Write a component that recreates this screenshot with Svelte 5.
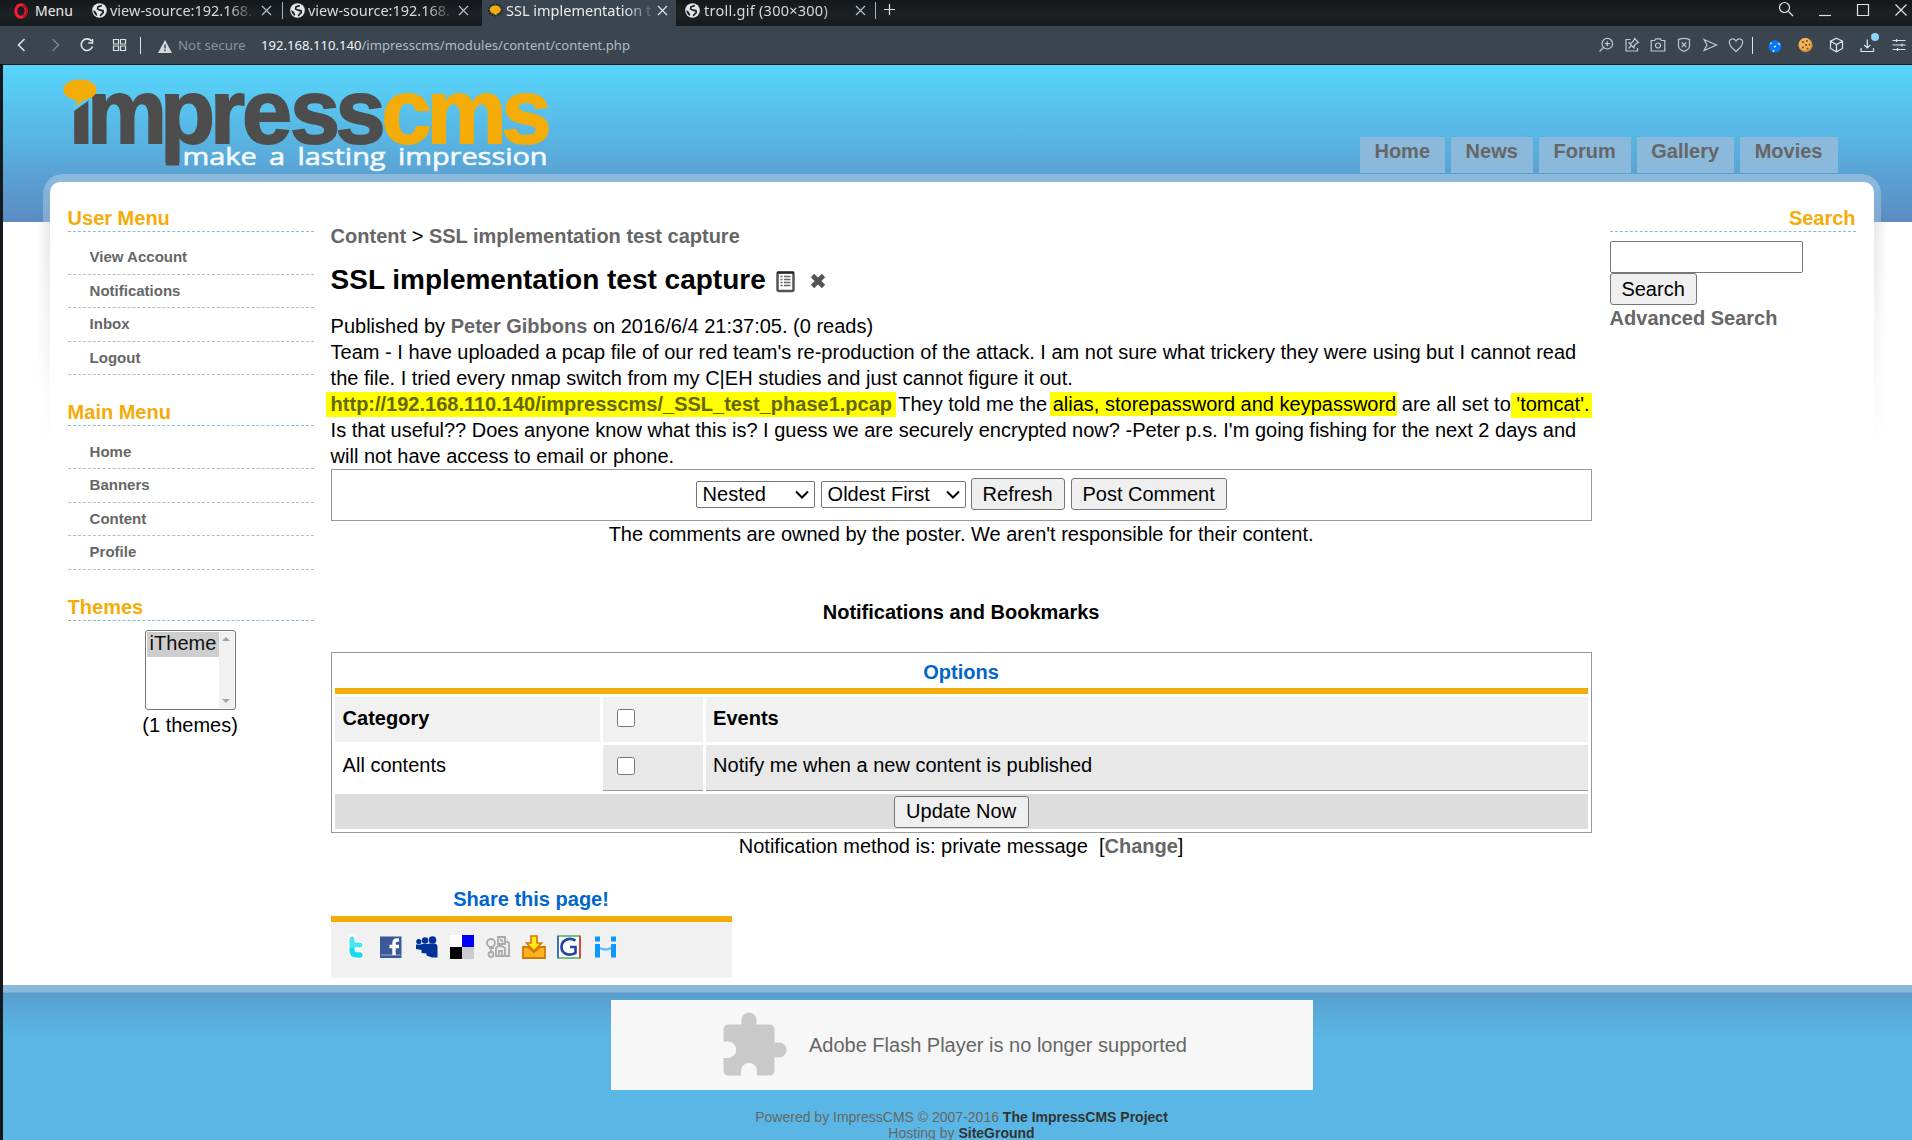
<script>
  const tabs = [
    { title: 'view-source:192.168.', icon: 'globe', kind: 'first' },
    { title: 'view-source:192.168.', icon: 'globe', kind: 'second' },
    { title: 'SSL implementation t', icon: 'bubble', kind: 'active' },
    { title: 'troll.gif (300×300)', icon: 'globe', kind: 'last' }
  ];
  const nav = ['Home', 'News', 'Forum', 'Gallery', 'Movies'];
  const menus = [
    { title: 'User Menu', items: ['View Account', 'Notifications', 'Inbox', 'Logout'] },
    { title: 'Main Menu', items: ['Home', 'Banners', 'Content', 'Profile'] }
  ];
</script>

<div class="window">
  <header class="tabbar">
    <div class="opera">
      <svg width="14" height="16" viewBox="0 0 14 16"><ellipse cx="7" cy="8" rx="5.2" ry="6.3" fill="none" stroke="#fb1d32" stroke-width="3" /><path d="M9 2.2c3 1 4 3.300 4 5.800s-1 4.800-4 5.800" fill="none" stroke="#a80f1e" stroke-width="2" /></svg>
      <span>Menu</span>
    </div>
    {#each tabs as tab}
      <div class="tab {tab.kind}">
        {#if tab.icon === 'globe'}
          <svg width="15" height="15" viewBox="0 0 15 15"><circle cx="7.500" cy="7.500" r="7.300" fill="#e4e6e8" /><path d="M9.800 2.600 6 3.800 5.600 6l2.600 1.200 2.800.6.200 1.800-1.700 1.600-1.300 1.700" fill="none" stroke="#1b1e21" stroke-width="1.700" /><path d="m1.500 7 2.300 1.800 1.400 2.700-.3 1.500C3 12 1 9.500 1.500 7z" fill="#1b1e21" /></svg>
        {:else}
          <svg width="15" height="15" viewBox="0 0 15 15"><ellipse cx="7.300" cy="7" rx="6.800" ry="5.800" fill="none" stroke="#14171a" stroke-width="1.200" stroke-dasharray="1.500 1.500" /><ellipse cx="7.300" cy="6.600" rx="5.500" ry="4" fill="#f4ac08" /><path d="m5 9.500 3 3 1.500-3z" fill="#f4ac08" /></svg>
        {/if}
        <span class="tab-title">{tab.title}</span>
        <svg class="x" width="11" height="11" viewBox="0 0 11 11"><path d="m1 1 9 9M10 1l-9 9" /></svg>
      </div>
    {/each}
    <svg class="line plus" width="13" height="13" viewBox="0 0 13 13"><path d="M6.500 1v11M1 6.500h11" /></svg>
    <div class="winctl">
      <svg class="line" width="16" height="16" viewBox="0 0 16 16"><circle cx="6.500" cy="6.500" r="5" /><path d="m10.500 10.500 4.500 4.500" /></svg>
      <svg class="line" width="14" height="16" viewBox="0 0 14 16"><path d="M1 14.500h12" /></svg>
      <svg class="line" width="14" height="16" viewBox="0 0 14 16"><path d="M1.500 3.500h11v11h-11z" /></svg>
      <svg class="line" width="14" height="16" viewBox="0 0 14 16"><path d="m1.500 3.500 11 11m0-11-11 11" /></svg>
    </div>
  </header>

  <div class="toolbar">
    <div class="navicons">
      <svg class="line" viewBox="0 0 16 16"><path d="m10.500 2-6 6 6 6" stroke-width="1.600" /></svg>
      <svg class="line dim" viewBox="0 0 16 16"><path d="m5.500 2 6 6-6 6" stroke-width="1.400" /></svg>
      <svg class="line" viewBox="0 0 16 16"><path d="M13.500 9.500a5.800 5.800 0 1 1-1-5.500M13.500 2v4H9.300" stroke-width="1.600" /></svg>
      <svg class="line" viewBox="0 0 16 16"><path d="M1.500 2.500h5v4.500h-5zM8.500 2.500h5v4.500h-5zM1.500 9h5v4.500h-5zM8.500 9h5v4.500h-5z" /></svg>
    </div>
    <i class="bar"></i>
    <svg class="warn" width="14" height="13" viewBox="0 0 14 13"><path d="M7 0 14 13H0z" fill="#d5d9dc" /><path d="M7 4.500v4M7 9.600v1.600" stroke="#3b454f" stroke-width="1.500" /></svg>
    <span class="secure">Not secure</span>
    <span class="url"><b>192.168.110.140</b>/impresscms/modules/content/content.php</span>
    <div class="actions">
      <svg class="line" viewBox="0 0 16 16"><circle cx="9.300" cy="6.700" r="5.300" /><path d="m5.500 10.500-4 4M9.300 4.200v5M6.800 6.700h5" /></svg>
      <svg class="line" viewBox="0 0 16 16"><path d="M6.500 2.500H2v11.500h11.500v-3M10.500 1.500l4 4-2 .8-2.300 2.300-.2 2.400-5-5 2.500-.2L9.800 3.500zM7.300 8.800 4.500 11.500" /></svg>
      <svg class="line" viewBox="0 0 16 16"><path d="M1.200 3.500H4.700l1-1.700h4.600l1 1.700h3.500V14H1.200z" /><circle cx="8" cy="8.500" r="2.500" /></svg>
      <svg class="line" viewBox="0 0 16 16"><path d="M8 1.300c2 0 4 .7 5.500 1.200v6.500c0 3-3 4.500-5.500 5.500-2.500-1-5.500-2.500-5.500-5.500V2.500C4 2 6 1.300 8 1.300zM5.700 5.500l4.600 4.700m0-4.700-4.600 4.700" /></svg>
      <svg class="line" viewBox="0 0 16 16"><path d="M2 2.500 14.500 8 2 13.500 5 8z" /></svg>
      <svg class="line" viewBox="0 0 16 16"><path d="M8 14.500C3 10.500 1.300 8 1.300 5.300 1.300 1.500 6 .8 8 4c2-3.200 6.700-2.500 6.700 1.300C14.700 8 13 10.500 8 14.500z" /></svg>
    </div>
    <i class="bar"></i>
    <div class="extensions">
      <svg viewBox="0 0 16 16"><circle cx="8" cy="9.500" r="6.200" fill="#0a78f5" /><path d="M3 6.500 5 6M7 10l2-1M11 6l2 2M6 15l1-2" stroke="#b8dcff" stroke-width="1.500" /></svg>
      <svg viewBox="0 0 16 16"><circle cx="7.500" cy="8" r="7.200" fill="#d98a2b" /><circle cx="7" cy="7.300" r="6.200" fill="#f0b45c" /><g fill="#7b3f14"><circle cx="5" cy="5" r="1" /><circle cx="9" cy="4" r=".9" /><circle cx="8" cy="8" r="1.100" /><circle cx="11.500" cy="7.500" r=".9" /><circle cx="5" cy="10.500" r=".9" /><circle cx="9.500" cy="11.500" r="1" /></g></svg>
      <svg class="line" viewBox="0 0 16 16"><path d="m7.500 1.200 6 3v7.200l-6 3.400-6-3.400V4.200zM1.500 4.200l6 3.300 6-3.300M7.500 7.500v7" /></svg>
      <svg class="line" viewBox="0 0 16 16"><path d="M1 11v3.500h12.500V11M7.300 2.500V11M4.300 8l3 3 3-3" /></svg>
      <svg class="line" viewBox="0 0 16 16"><path d="M1.500 3.500h13M1.500 8h13M1.500 12.500h13M5.500 2v3M11 6.500v3M6.500 11v3" /></svg>
      <i class="dot"></i>
    </div>
  </div>

  <main class="page">
    <div class="banner">
      <svg class="logo" width="490" height="98" viewBox="0 0 490 98">
        <g font-family="Liberation Sans" font-weight="bold" font-size="90" stroke-width="1.800">
          <text x="5.700 24 97 147 179 227 272.500" y="65.500" fill="#4d4d4d" stroke="#4d4d4d">ımpress</text>
          <text x="318.500 363.500 438.500" y="65.500" fill="#f4ac08" stroke="#f4ac08">cms</text>
        </g>
        <path d="M103 78h13v10.500h-13z" fill="#4d4d4d" />
        <path d="M8 16h20l-3 8-14 10z" fill="#5ac8f2" />
        <path d="M17 2.500c9 0 16.500 4 16.500 10.300 0 5.500-5 9.200-13 10.200-2 3-4.500 4.500-9 5.500 2-2 2.500-3 2-5.500C5.500 22 .5 18.500.5 12.800.5 6.500 8 2.500 17 2.500z" fill="#f4ac08" />
        <text x="119.500" y="88" font-family="Open Sans" font-size="23.500" word-spacing="4" fill="#f4f9fd" stroke="#f4f9fd" stroke-width=".6" textLength="365" lengthAdjust="spacingAndGlyphs">make a lasting impression</text>
      </svg>
      <nav>
        {#each nav as item}<a href="#top">{item}</a>{/each}
      </nav>
    </div>

    <div class="frame">
      <div class="sheet">
        <aside class="left">
          {#each menus as menu}
            <section class="menu">
              <h3>{menu.title}</h3>
              <ul>
                {#each menu.items as item}<li>{item}</li>{/each}
              </ul>
            </section>
          {/each}
          <section>
            <h3>Themes</h3>
            <div class="themes">
              <div class="listbox">
                <span>iTheme</span>
                <div class="scroll">
                  <svg width="8" height="4" viewBox="0 0 8 4"><path d="M0 4 4 0l4 4z" fill="#a3a3a3" /></svg>
                  <svg width="8" height="4" viewBox="0 0 8 4"><path d="m0 0 4 4 4-4z" fill="#a3a3a3" /></svg>
                </div>
              </div>
              <span>(1 themes)</span>
            </div>
          </section>
        </aside>

        <article>
          <div class="crumbs"><a href="#top">Content</a> &gt; <a href="#top">SSL implementation test capture</a></div>
          <h1>
            <span>SSL implementation test capture</span>
            <svg class="doc" width="20" height="22" viewBox="0 0 20 22"><rect x="1.500" y="1.500" width="16" height="18.500" rx="1.500" fill="#fff" stroke="#555" stroke-width="2.500" /><path d="M1 1.500h17" stroke="#222" stroke-width="2" /><path d="M4.500 5.500h2M8 5.500h6.500M4.500 8.500h2M8 8.500h6.500M4.500 11.500h2M8 11.500h6.500M4.500 14.500h2M8 14.500h6.500" stroke="#666" stroke-width="1.500" /></svg>
            <svg class="del" width="16" height="16" viewBox="0 0 16 16"><path d="m2.500 2.500 11 11m0-11-11 11" stroke="#555" stroke-width="4.800" /></svg>
          </h1>
          <p>
            Published by <a href="#top">Peter Gibbons</a> on 2016/6/4 21:37:05. (0 reads)<br />
            Team - I have uploaded a pcap file of our red team's re-production of the attack. I am not sure what trickery they were using but I cannot read<br />
            the file. I tried every nmap switch from my C|EH studies and just cannot figure it out.<br />
            <mark class="url-mark">http://192.168.110.140/impresscms/_SSL_test_phase1.pcap</mark> They told me the <mark class="words">alias, storepassword and keypassword</mark> are all set to<mark class="value">&nbsp;'tomcat'.</mark><br />
            Is that useful?? Does anyone know what this is? I guess we are securely encrypted now? -Peter p.s. I'm going fishing for the next 2 days and<br />
            will not have access to email or phone.
          </p>
          <div class="comments">
            <select class="nested"><option>Nested</option></select>
            <select class="order"><option>Oldest First</option></select>
            <button class="refresh">Refresh</button>
            <button class="post">Post Comment</button>
          </div>
          <div class="center">The comments are owned by the poster. We aren't responsible for their content.</div>
          <h4>Notifications and Bookmarks</h4>
          <div class="options">
            <div class="caption">Options</div>
            <div class="row head"><div>Category</div><div><input type="checkbox" /></div><div>Events</div></div>
            <div class="row body"><div>All contents</div><div><input type="checkbox" /></div><div>Notify me when a new content is published</div></div>
            <div class="foot"><button>Update Now</button></div>
          </div>
          <div class="center">Notification method is: private message&nbsp; [<a href="#top">Change</a>]</div>

          <section class="share">
            <div class="share-title">Share this page!</div>
            <div class="share-icons">
              <svg viewBox="0 0 24 24"><path d="M8 4v11q0 5 5 5h3M8 10h8" fill="none" stroke="#fff" stroke-width="8" stroke-linecap="round" /><path d="M8 4v11q0 5 4.500 5H16M8 10h8" fill="none" stroke="#4be4f3" stroke-width="5" stroke-linecap="round" /><path d="M8 15q0 5 4.500 5H16" fill="none" stroke="#12dcf0" stroke-width="5" stroke-linecap="round" /></svg>
              <svg viewBox="0 0 24 24"><path d="M1 1.500h21.500v21.500H1z" fill="#3b5998" /><path d="M2 19h19.500v2H2z" fill="#6d84b4" /><path d="M20 5h-2q-3 0-3 3.500V20M10.500 11.500H20" fill="none" stroke="#fff" stroke-width="3.400" /></svg>
              <svg viewBox="0 0 24 24" fill="#003399"><circle cx="3.800" cy="6.500" r="2.600" /><circle cx="10" cy="5.500" r="3.200" /><circle cx="17.500" cy="5" r="3.800" /><path d="M1 9.500h5l1-.5h6l1-.5h5q3.500 0 3.500 3.500v10.500H17l-5.500-2v-2l-5-.500v-3L1 14z" /></svg>
              <svg viewBox="0 0 24 24"><path d="M0 0h12v12H0z" fill="#fff" /><path d="M12 0h12v12H12z" fill="#00f" /><path d="M0 12h12v12H0z" /><path d="M12 12h12v12H12z" fill="#ccc" /></svg>
              <svg viewBox="0 0 24 24" fill="#eee" stroke="#aaa" stroke-width="1.800"><circle cx="5" cy="8" r="4" /><path d="M5 12v5M3 13h5" /><circle cx="5" cy="19.500" r="2.500" /><path d="M12 2h7v7h-7zM14 4l3 3M20 6l3 2v13h-3M10 21v-8l4-3 5 3v8zM13 21v-5h3v5" /></svg>
              <svg viewBox="0 0 24 24"><path d="M1 12h5l6 5 6-5h5v11H1z" fill="#fbb321" stroke="#d47804" stroke-width="1.800" /><path d="M9 1h6v7h4.500L12 16 4.500 8H9z" fill="#ffe818" stroke="#d47804" stroke-width="1.600" /></svg>
              <svg viewBox="0 0 24 24"><path d="M1 1h22v22H1z" fill="#fff" stroke="#4caf50" stroke-width="1.700" /><path d="M1 1v22" stroke="#3366cc" stroke-width="1.700" /><path d="M23 1v22" stroke="#e53935" stroke-width="1.700" /><path d="M18.500 5.500C11 1.500 4.500 6 4.500 12s6 10 14 6v-6H13" fill="none" stroke="#2444a8" stroke-width="2.600" /></svg>
              <svg viewBox="0 0 24 24" fill="#0a98ff"><path d="M2 1.500h5v5H2zM18 1.500h5v5h-5zM2 9h5v13.500H2zM18 9h5v13.500h-5z" /><path d="M7 13q5.500 3 11 0" fill="none" stroke="#5cbcff" stroke-width="2.500" /></svg>
            </div>
          </section>
        </article>

        <aside class="right">
          <h3>Search</h3>
          <div class="searchbox">
            <input type="text" />
            <button>Search</button>
            <a href="#top">Advanced Search</a>
          </div>
        </aside>
      </div>
    </div>

    <footer>
      <div class="flash">
        <svg width="64" height="64" viewBox="0 0 64 64"><path d="M6 12.500h12.500V8a7.500 7.500 0 0 1 15 0v4.500H46q5.500 0 5.500 5.500v12.500H56a7.500 7.500 0 0 1 0 15h-4.500V58q0 5.500-5.500 5.500H34V59a8 8 0 0 0-16 0v4.500H6Q.5 63.500.5 58V46H5a8 8 0 0 0 0-16.500H.5V18q0-5.500 5.500-5.500z" fill="#c9c9c9" /></svg>
        <span>Adobe Flash Player is no longer supported</span>
      </div>
      <div class="credits">
        <div>Powered by ImpressCMS © 2007-2016 <b>The ImpressCMS Project</b></div>
        <div>Hosting by <b>SiteGround</b></div>
      </div>
    </footer>
  </main>
</div>

<style>
  :global(body) { overflow: hidden; }
  .window { width: 1912px; height: 1140px; overflow: hidden; display: flex; flex-direction: column; background: #15181c; font: 20px/26px "Liberation Sans", Arial, sans-serif; color: #000; }
  svg { flex: none; }
  a { color: #666; font-weight: bold; text-decoration: none; }
  .line { fill: none; stroke: #dfe3e6; stroke-width: 1.2; }
  .dim { opacity: .4; }

  .tabbar { flex: none; height: 26px; display: flex; background: linear-gradient(#15181b, #1d2124 50%, #171a1d); font: 14.5px/20px "Noto Sans", sans-serif; color: #d7d9db; }
  .opera { width: 78px; padding: 0 0 5px 14px; box-sizing: border-box; display: flex; align-items: center; gap: 7px; color: #eceeef; font-size: 14px; }
  .tab { box-sizing: border-box; display: flex; align-items: center; padding: 0 0 6px; }
  .tab-title { flex: 1; min-width: 0; margin-left: 3px; overflow: hidden; white-space: nowrap; -webkit-mask-image: linear-gradient(90deg, #000 118px, transparent 146px); }
  .x { fill: none; stroke: #b9bec2; stroke-width: 1.2; }
  .first { width: 204px; padding-left: 14px; padding-right: 10px; }
  .first .tab-title, .second .tab-title { margin-right: 5px; }
  .second { width: 200px; padding-left: 8px; padding-right: 13px; background: linear-gradient(#a5b3c3, #a5b3c3) no-repeat 0 2px / 1px 17px; }
  .active { width: 194px; padding-left: 6px; padding-right: 8px; background: #3b454f; color: #e9ebec; }
  .active .tab-title { margin-right: 3px; -webkit-mask-image: linear-gradient(90deg, #000 118px, transparent 150px); }
  .active .x { stroke: #e0e3e5; }
  .last { width: 200px; padding-left: 9px; padding-right: 10px; background: linear-gradient(#a5b3c3, #a5b3c3) no-repeat right 0 top 2px / 1px 17px; }
  .last .tab-title { margin-left: 4px; letter-spacing: .25px; }
  .plus { margin: 3px 0 0 7px; }
  .winctl { margin-left: auto; padding: 1px 4px 0 0; display: flex; gap: 24px; }

  .toolbar { flex: none; height: 39px; box-sizing: border-box; border-bottom: 1px solid #11151a; background: #3b454f; display: flex; align-items: center; padding: 0 5px 0 14px; font: 13.3px/20px "Noto Sans", sans-serif; }
  .toolbar svg { width: 16px; height: 16px; }
  .navicons { display: flex; gap: 16.5px; width: 114px; margin-right: 12px; }
  .bar { width: 1px; height: 17px; background: #dfe3e6; }
  .toolbar .warn { width: 14px; height: 13px; margin: 2px 6px 0 17px; }
  .secure { color: #89919a; width: 83px; }
  .url { color: #b1b9c2; white-space: nowrap; font-size: 13.1px; }
  .url b { font-weight: normal; color: #f0f2f4; }
  .actions { display: flex; gap: 10px; margin-left: auto; margin-right: 8px; }
  .actions svg { stroke: #bfc9cb; }
  .extensions { position: relative; display: flex; gap: 15px; margin-left: 14px; }
  .dot { position: absolute; right: 28px; top: -4px; width: 8px; height: 8px; border-radius: 50%; background: #8bd4fb; }

  .page { flex: 1; margin-left: 3px; display: flex; flex-direction: column; background: linear-gradient(#57d6fd, #58b2e0 50%, #5aa0d2 72%, #5a8bc2) no-repeat 0 0 / 100% 157px, #fff; }
  .banner { height: 109px; display: flex; justify-content: space-between; align-items: flex-end; }
  .logo { margin: 0 0 -1px 60px; }
  nav { display: flex; gap: 6px; margin: 0 74.500px 1px 0; }
  nav a { height: 36px; box-sizing: border-box; padding: 1px 15px 0 14.600px; background: #8ab9dc; }

  .frame { position: relative; height: 811px; margin: 0 31px 0 40px; padding: 8px 7px 0; box-sizing: border-box; background: linear-gradient(#8ab9dc, #8ab9dc 8px, rgba(255, 255, 255, .25) 18px) no-repeat 0 0 / 100% 48px; border-radius: 20px 20px 0 0; }
  .frame::before { content: ""; position: absolute; inset: 48px -6px auto; height: 220px; background: linear-gradient(rgba(255,255,255,0), #fff), linear-gradient(90deg, #fff, #e8e8e8 13px, #fff 20px, #fff calc(100% - 20px), #e8e8e8 calc(100% - 13px), #fff); }
  .sheet { position: relative; height: 803px; background: #fff; border-radius: 10px 10px 0 0; display: flex; }
  .left { width: 246px; margin: 23px 17px 0 17.600px; }
  h3 { margin: 0; height: 26px; border-bottom: 1px dashed #8ab9dc; font-size: 20px; line-height: 26px; color: #f4ac08; }
  .menu { height: 194.400px; }
  ul { list-style: none; margin: 0; padding: 9.300px 0 0; }
  li { height: 33.500px; box-sizing: border-box; border-bottom: 1px dashed #bbb; padding: 2.900px 0 0 22px; font-size: 15px; line-height: 26px; font-weight: bold; color: #666; }
  .themes { display: flex; flex-direction: column; align-items: center; padding: 9px 1px 0 0; }
  .listbox { box-sizing: border-box; width: 91px; height: 80px; border: 1px solid #767676; border-radius: 3px; padding: 1px; display: flex; justify-content: space-between; margin-bottom: 2px; }
  .listbox span { height: 25px; width: 69px; padding-left: 3px; line-height: 22px; background: #cecece; color: #101010; }
  .scroll { width: 15px; background: #f1f1f1; display: flex; flex-direction: column; justify-content: space-between; align-items: center; padding: 5px 0; }

  article { width: 1261px; padding-top: 41px; white-space: nowrap; }
  .crumbs { height: 26px; }
  h1 { margin: 16px 0 18px; height: 30px; display: flex; align-items: center; font-size: 28px; line-height: 30px; }
  .doc { margin: 3px 0 0 10.500px; }
  .del { margin: 2px 0 0 13.500px; }
  p { margin: 0; }
  mark { background: #ff0; color: #000; }
  .url-mark { color: #660; font-weight: bold; padding: 1px 4px 2px 5px; margin: 0 -3px 0 -5px; }
  .words { padding: 1px 1px 1px 3px; margin: 0 -1px 0 -3px; }
  .value { padding: 0 2px 3px 0; }
  .comments { height: 52px; box-sizing: border-box; border: 1px solid #999; padding-bottom: 2px; display: flex; justify-content: center; align-items: center; gap: 6px; }
  button, select, input { font: 20px "Liberation Sans", Arial, sans-serif; color: #000; margin: 0; box-sizing: border-box; }
  button { height: 32px; border: 1px solid #767676; border-radius: 3px; background: #efefef; padding: 0; }
  select { height: 27px; border: 1px solid #767676; border-radius: 2px; padding: 0 0 0 6px; appearance: none; background: #fff url("data:image/svg+xml,%3Csvg xmlns='http://www.w3.org/2000/svg' width='14' height='9' viewBox='0 0 14 9'%3E%3Cpath d='m1 1.500 6 6 6-6' fill='none' stroke='%23000' stroke-width='2'/%3E%3C/svg%3E") no-repeat right 5px center; }
  .nested { width: 119px; }
  .order { width: 145px; }
  .refresh { width: 94px; margin-left: -1px; }
  .post { width: 156px; }
  .center { text-align: center; }
  h4 { margin: 52px 0 27px; text-align: center; font-size: 20px; line-height: 26px; }
  .options { height: 181px; box-sizing: border-box; border: 1px solid #999; padding: 3px; display: flex; flex-direction: column; gap: 3px; }
  .caption { box-sizing: border-box; height: 38px; padding-top: 3px; border-bottom: 6px solid #f4ac08; color: #06c; font-weight: bold; text-align: center; }
  .row { display: grid; grid-template-columns: 265px 100px 1fr; gap: 3px; }
  .row > div { box-sizing: border-box; height: 45px; padding: 8px; }
  .row > div:last-child { padding-left: 7.500px; }
  .head > div { background: #f1f1f1; font-weight: bold; }
  .body > div { height: 46px; padding-top: 7px; background: #e8e8e8; border-bottom: 1px solid #999; }
  .body > div:first-child { background: #fff; border: 0; }
  .row input { display: block; width: 18px; height: 18px; margin: 4px 0 0 6px; }
  .body input { margin-top: 5px; }
  .foot { height: 35px; background: #ddd; display: flex; justify-content: center; align-items: center; }
  .foot button { width: 135px; }
  .share { width: 401px; margin-top: 27px; }
  .share-title { height: 30px; text-align: center; color: #06c; font-weight: bold; border-bottom: 6px solid #f4ac08; }
  .share-icons { height: 56px; box-sizing: border-box; background: #f1f1f1; display: flex; gap: 11.600px; padding: 13px 0 0 13px; }
  .share-icons svg { width: 24px; height: 24px; }

  .right { width: 246px; margin: 23px 0 0 18px; }
  .right h3 { text-align: right; }
  .searchbox { padding-top: 9px; display: flex; flex-direction: column; align-items: flex-start; }
  .searchbox input { width: 193px; height: 32px; border: 1px solid #767676; border-radius: 2px; }
  .searchbox button { width: 87px; }

  footer { flex: 1; display: flex; flex-direction: column; align-items: center; padding-left: 9px; background: linear-gradient(#8ab9dc 7px, #5a9ac8 8px, #58a2d3 14px, #5ab0de 38px, #5ab7e5 58px); }
  .flash { width: 702px; box-sizing: border-box; height: 90px; margin-top: 15px; padding-right: 14px; background: #f7f7f7; color: #666; display: flex; align-items: center; justify-content: center; gap: 22px; }
  .flash svg { margin-top: -3px; }
  .credits { margin: 19px 1px 0 0; text-align: center; font-size: 14px; line-height: 16px; color: #666; }
  .credits b { color: #333; }
</style>
